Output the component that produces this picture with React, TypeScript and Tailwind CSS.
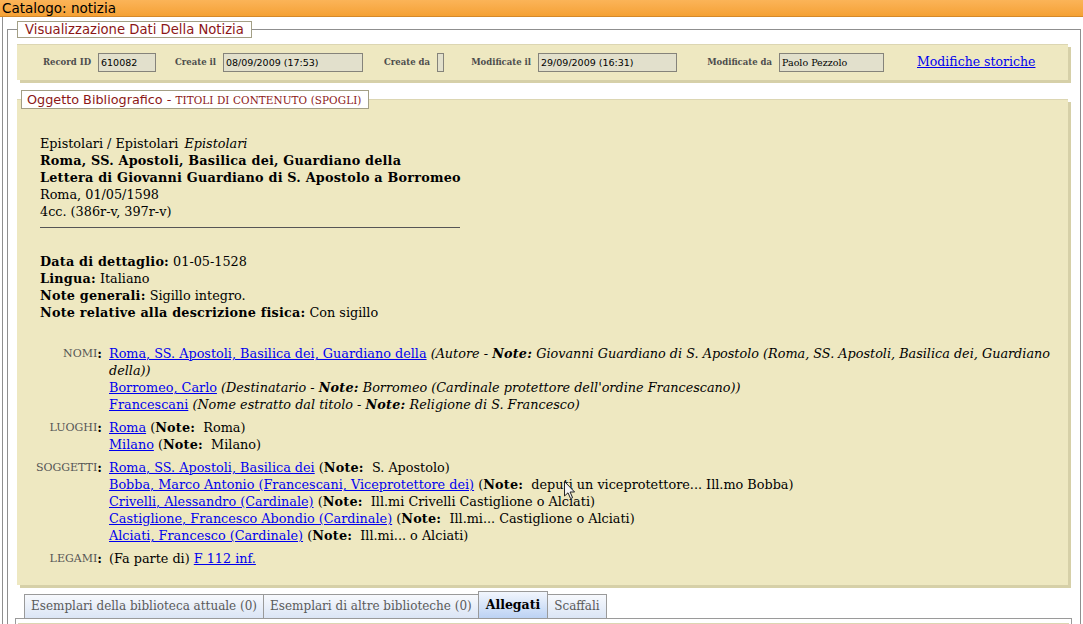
import React from 'react'

const serif = "font-['DejaVu_Serif','Liberation_Serif',serif]"
const sans = "font-['DejaVu_Sans','Liberation_Sans',sans-serif]"

function Label({ w, children }: { w: string; children: React.ReactNode }) {
  return (
    <div className={`${w} flex justify-end whitespace-nowrap pr-[7px] ${serif} text-[8.5px] font-bold text-[#4d4d4d]`}>
      {children}
    </div>
  )
}

function Box({ w, value, font = sans }: { w: string; value?: string; font?: string }) {
  return (
    <div className={`${w} h-[19px] bg-[#e2e0cc] border border-[#85837a] pl-[2px] text-[9.5px] leading-[17px] text-black whitespace-nowrap overflow-hidden ${font}`}>
      {value}
    </div>
  )
}

function Lnk({ children }: { children: React.ReactNode }) {
  return <a href="#" className="text-[#0000ee] underline">{children}</a>
}

function B({ children }: { children: React.ReactNode }) {
  return <b className="tracking-[0.2px]">{children}</b>
}

function Note({ children }: { children: React.ReactNode }) {
  return (
    <>
      (<B>Note:</B>{'\u00a0 '}{children})
    </>
  )
}

function RelLabel({ children }: { children: React.ReactNode }) {
  return (
    <div className="flex justify-end whitespace-nowrap">
      <span className="text-[11px] text-[#555]">{children}</span>
      <b>:</b>
    </div>
  )
}

const tabs = [
  { label: 'Esemplari della biblioteca attuale (0)', active: false },
  { label: 'Esemplari di altre biblioteche (0)', active: false },
  { label: 'Allegati', active: true },
  { label: 'Scaffali', active: false },
]

export default function App() {
  return (
    <div className={`w-[1083px] h-[624px] overflow-hidden bg-white relative ${serif}`}>
      <div className={`h-[17px] bg-gradient-to-b from-[#fbb458] to-[#f5a133] border-b border-[#d5892a] pl-[2px] text-[13.5px] leading-[16px] text-black ${sans}`}>
        Catalogo: notizia
      </div>

      <div className="ml-[2px] mr-[2px] border-l border-[#8f8f8f] pl-[4px] pt-[4px] h-[607px]">
        <fieldset className="border border-[#8f8f8f] pl-[9px] pr-[12px] pb-[20px] min-w-0">
          <legend className={`border border-[#a39f85] bg-white px-[7px] text-[13.2px] leading-[15px] text-[#8c1717] ${sans}`}>
            Visualizzazione Dati Della Notizia
          </legend>

          <div className="mt-[6px] h-[36px] bg-[#eee8c1] border-t border-[#dcd6b2] shadow-[3px_3px_0_#d6d0a8] flex items-center pl-[25px]">
            <Label w="w-[56px]">Record ID</Label>
            <Box w="w-[58px]" value="610082" />
            <Label w="w-[67px]">Create il</Label>
            <Box w="w-[140px]" value="08/09/2009 (17:53)" />
            <Label w="w-[74px]">Create da</Label>
            <Box w="w-[7px]" />
            <Label w="w-[94px]">Modificate il</Label>
            <Box w="w-[139px]" value="29/09/2009 (16:31)" />
            <Label w="w-[102px]">Modificate da</Label>
            <Box w="w-[105px]" value="Paolo Pezzolo" font={serif} />
            <a href="#" className="ml-[33px] text-[12.5px] text-[#0000ee] underline whitespace-nowrap">
              Modifiche storiche
            </a>
          </div>

          <fieldset className="mt-[10px] bg-[#eee8c1] border-t border-[#dcd6b2] shadow-[3px_3px_0_#d6d0a8] pl-[4px] pb-[18px] min-w-0">
            <legend className="border border-[#a39f85] bg-white pl-[5px] pr-[7px] leading-[15px] text-[#8c1717] whitespace-nowrap">
              <span className={`text-[12.8px] ${sans}`}>Oggetto Bibliografico - </span>
              <span className="text-[10.4px] tracking-[0.1px]">TITOLI DI CONTENUTO (SPOGLI)</span>
            </legend>

            <div className="pl-[19px] pr-[4px] pt-[26px] text-[12.8px] leading-[17px] text-black">
              <div>
                Epistolari / Epistolari <i className="ml-[2px]">Epistolari</i>
              </div>
              <div className="font-bold tracking-[0.2px]">Roma, SS. Apostoli, Basilica dei, Guardiano della</div>
              <div className="font-bold tracking-[0.2px]">Lettera di Giovanni Guardiano di S. Apostolo a Borromeo</div>
              <div>Roma, 01/05/1598</div>
              <div>4cc. (386r-v, 397r-v)</div>
              <div className="mt-[7px] mb-[25px] w-[420px] border-t border-[#555]" />

              <div><B>Data di dettaglio:</B> 01-05-1528</div>
              <div><B>Lingua:</B> Italiano</div>
              <div><B>Note generali:</B> Sigillo integro.</div>
              <div><B>Note relative alla descrizione fisica:</B> Con sigillo</div>

              <div className="mt-[24px] -ml-[12px] grid grid-cols-[74px_1fr] gap-x-[7px] gap-y-[6px]">
                <RelLabel>NOMI</RelLabel>
                <div>
                  <div>
                    <Lnk>Roma, SS. Apostoli, Basilica dei, Guardiano della</Lnk>{' '}
                    <i>(Autore - <B>Note:</B> Giovanni Guardiano di S. Apostolo (Roma, SS. Apostoli, Basilica dei, Guardiano della))</i>
                  </div>
                  <div>
                    <Lnk>Borromeo, Carlo</Lnk>{' '}
                    <i>(Destinatario - <B>Note:</B> Borromeo (Cardinale protettore dell'ordine Francescano))</i>
                  </div>
                  <div>
                    <Lnk>Francescani</Lnk>{' '}
                    <i>(Nome estratto dal titolo - <B>Note:</B> Religione di S. Francesco)</i>
                  </div>
                </div>

                <RelLabel>LUOGHI</RelLabel>
                <div>
                  <div><Lnk>Roma</Lnk> <Note>Roma</Note></div>
                  <div><Lnk>Milano</Lnk> <Note>Milano</Note></div>
                </div>

                <RelLabel>SOGGETTI</RelLabel>
                <div>
                  <div><Lnk>Roma, SS. Apostoli, Basilica dei</Lnk> <Note>S. Apostolo</Note></div>
                  <div><Lnk>Bobba, Marco Antonio (Francescani, Viceprotettore dei)</Lnk> <Note>deputi un viceprotettore... Ill.mo Bobba</Note></div>
                  <div><Lnk>Crivelli, Alessandro (Cardinale)</Lnk> <Note>Ill.mi Crivelli Castiglione o Alciati</Note></div>
                  <div><Lnk>Castiglione, Francesco Abondio (Cardinale)</Lnk> <Note>Ill.mi... Castiglione o Alciati</Note></div>
                  <div><Lnk>Alciati, Francesco (Cardinale)</Lnk> <Note>Ill.mi... o Alciati</Note></div>
                </div>

                <RelLabel>LEGAMI</RelLabel>
                <div>
                  (Fa parte di) <Lnk>F 112 inf.</Lnk>
                </div>
              </div>
            </div>
          </fieldset>

          <div className="mt-[6px] -ml-[2px] -mr-[4px]">
            <div className="flex items-end pl-[9px]">
              {tabs.map((t, i) => (
                <div
                  key={t.label}
                  className={`${i > 0 ? '-ml-px' : ''} border border-b-0 border-[#9a9a9a] px-[6px] whitespace-nowrap bg-gradient-to-b ${
                    t.active
                      ? 'relative h-[27px] leading-[26px] px-[7px] text-[12.5px] font-bold text-black from-[#f2f6fd] to-[#bcd2f3]'
                      : 'h-[24px] leading-[23px] text-[12px] text-[#5a5a5a] from-[#f7f9fd] to-[#dbe5f5]'
                  }`}
                >
                  {t.label}
                </div>
              ))}
            </div>
            <div className="border border-[#9a9a9a] pt-[4px] px-[2px]">
              <div className="h-[20px] bg-[#eee8c1] border-t border-[#dcd6b2]" />
            </div>
          </div>
        </fieldset>
      </div>

      <svg className="absolute left-[564px] top-[481px]" width="12" height="19" viewBox="0 0 12 19">
        <path d="M0.5 0.5 L0.5 15 L4 11.8 L6.6 17.6 L8.6 16.7 L6.1 11 L10.6 11 Z" fill="#f4f4f4" stroke="#222" strokeWidth="1" strokeLinejoin="round" />
      </svg>
    </div>
  )
}
